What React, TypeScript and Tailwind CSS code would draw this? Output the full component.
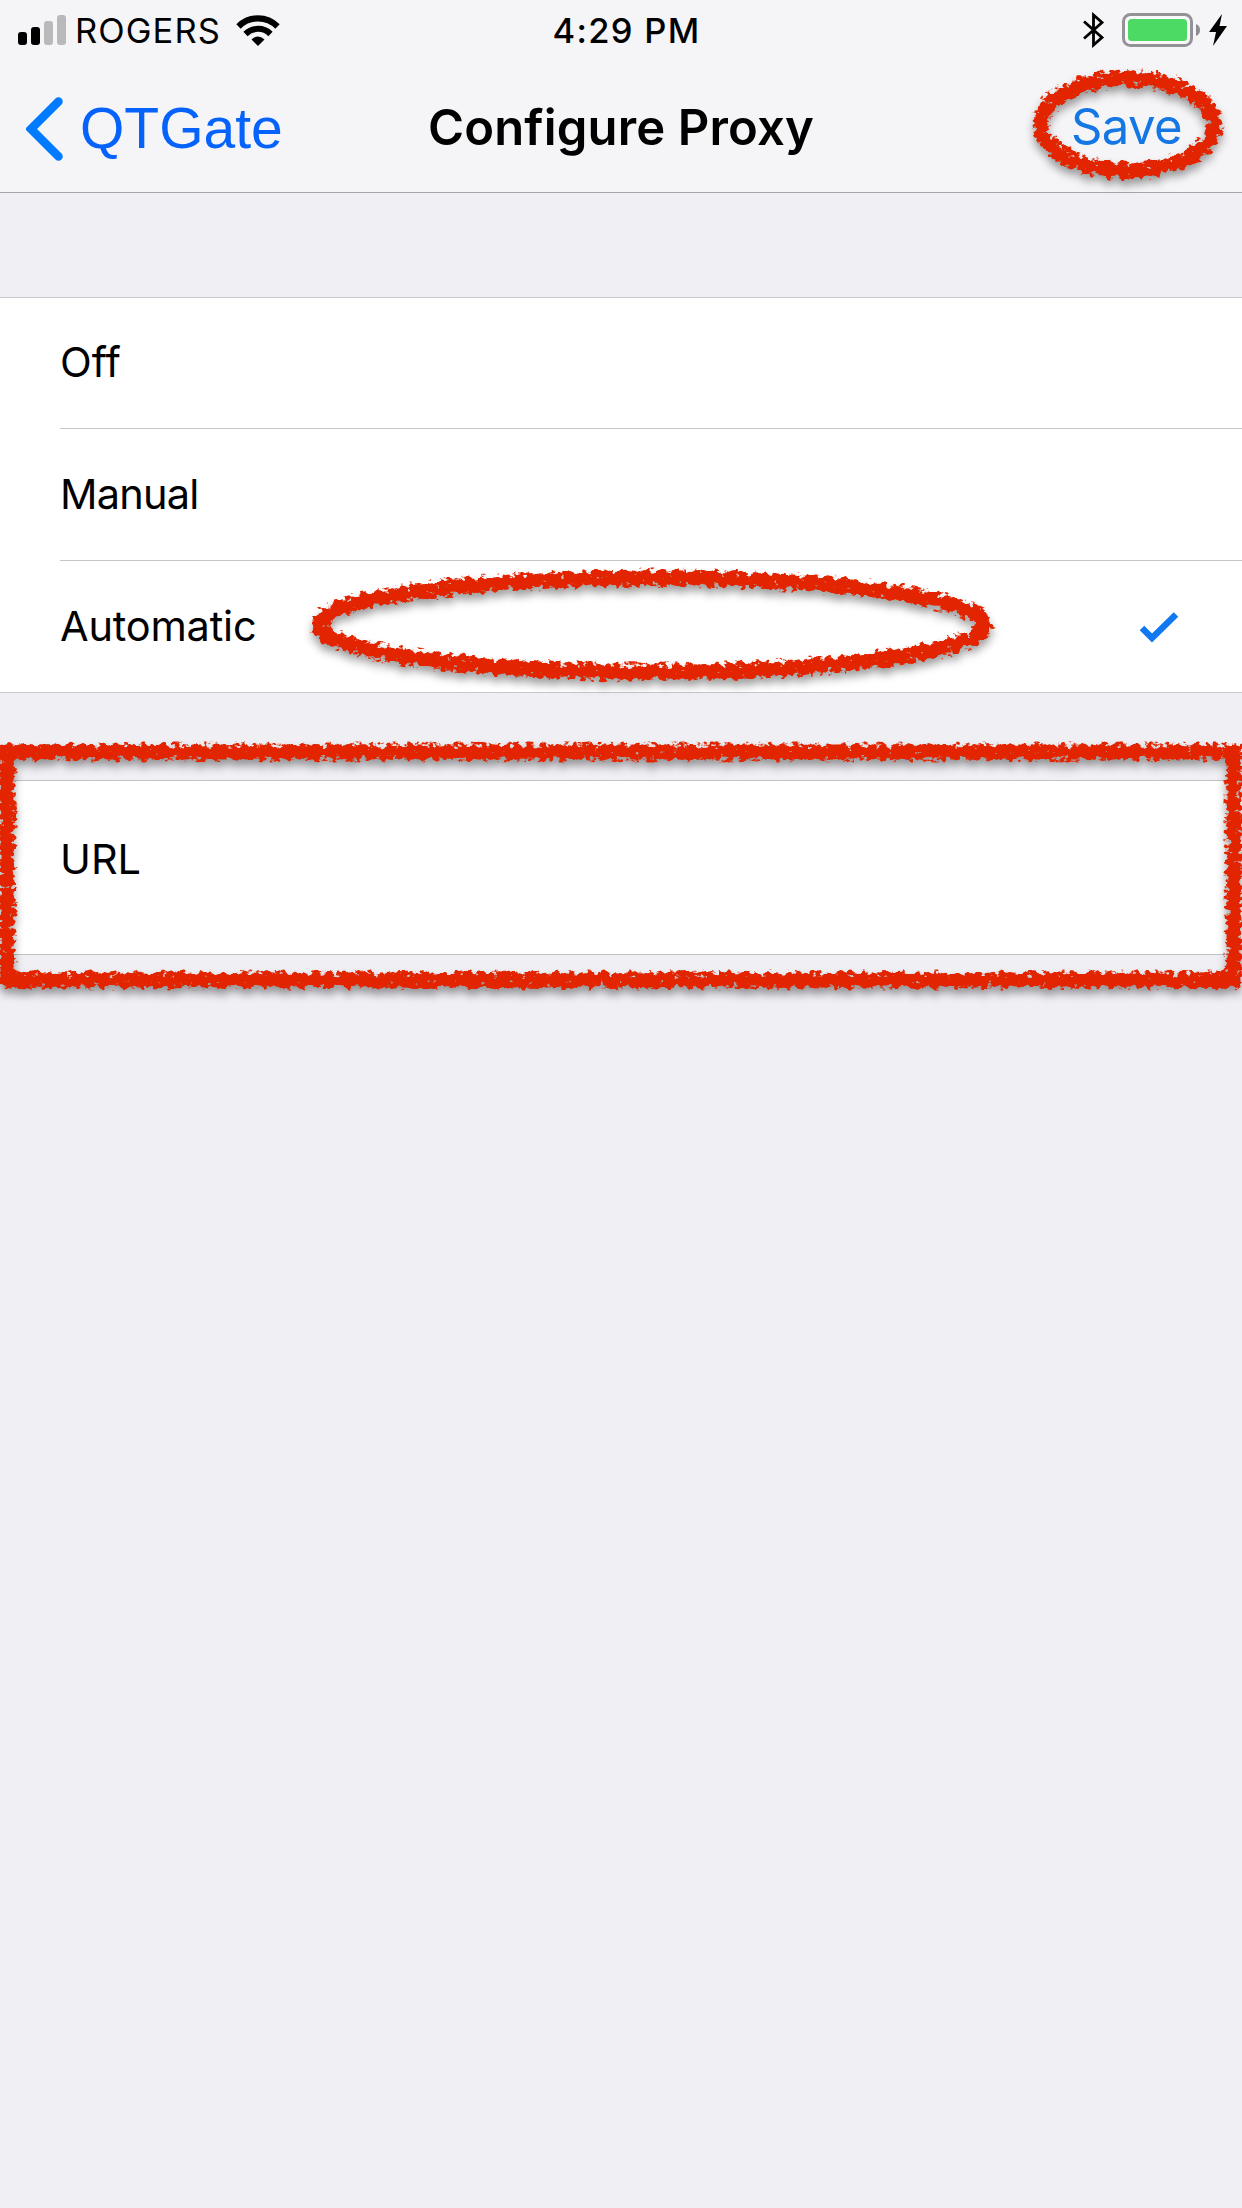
function StatusBar() {
  return (
    <div className="grid h-[60px] grid-cols-3 items-center">
      <div className="flex items-center pl-[18px]">
        <svg width="48" height="30" viewBox="0 0 48 30">
          <rect x="0" y="17" width="9" height="13" rx="3" fill="#000" />
          <rect x="13" y="12" width="9" height="18" rx="3" fill="#000" />
          <rect x="26" y="6" width="9" height="24" rx="3" fill="#b9b9bb" />
          <rect x="39" y="0" width="9" height="30" rx="3" fill="#b9b9bb" />
        </svg>
        <span className="ml-[9px] pt-[2px] text-[34.5px] tracking-[1.1px]">ROGERS</span>
        <svg className="ml-[15px]" width="44" height="31" viewBox="0 0 44 31" fill="none">
          <path d="M2.5 11.5A27.5 27.5 0 0 1 41.5 11.5" stroke="#000" strokeWidth="6.2" />
          <path d="M9.5 19A17.8 17.8 0 0 1 34.5 19" stroke="#000" strokeWidth="6" />
          <path d="M15.5 24.5Q22 18.5 28.5 24.5L22 31Z" fill="#000" />
        </svg>
      </div>
      <div className="pl-[11px] pt-[2px] text-center text-[34.5px] font-medium tracking-[1.3px]">4:29 PM</div>
      <div className="flex items-center justify-end pr-[15px]">
        <svg width="22" height="36" viewBox="0 0 22 36" fill="none" stroke="#000" strokeWidth="2.8">
          <path d="M1 9.5L19 25.5L10.5 33V3L19 10.5L1 26.5" />
        </svg>
        <svg className="ml-[17px]" width="80" height="34" viewBox="0 0 80 34">
          <rect x="1.5" y="1.5" width="68" height="31" rx="7" fill="#f9f9fa" stroke="#939297" strokeWidth="3" />
          <rect x="6" y="6" width="59" height="22" rx="3.5" fill="#4cd964" />
          <path d="M74 11Q78 12.500 78 17T74 23Z" fill="#8e8d92" />
        </svg>
        <svg className="ml-[7px]" width="18" height="32" viewBox="0 0 18 32">
          <path d="M13 0L0 18H7L4 32L18 12H10.500Z" fill="#000" />
        </svg>
      </div>
    </div>
  );
}

function NavBar() {
  return (
    <div className="grid h-[132px] grid-cols-[1fr_auto_1fr] items-center pt-[5px]">
      <div className="flex items-center pl-[26px]">
        <svg width="37" height="64" viewBox="0 0 37 64" fill="none">
          <path d="M32.500 4.500L5 32L32.500 59.500" stroke="#007aff" strokeWidth="8.500" strokeLinecap="round" strokeLinejoin="miter" />
        </svg>
        <span className="ml-[17px] font-['Liberation_Sans',sans-serif] text-[57px] text-[#0563fb]">QTGate</span>
      </div>
      <h1 className="pb-[2px] text-[49px] font-semibold tracking-[0.15px]">Configure Proxy</h1>
      <div className="flex justify-end pr-[60px] pb-[3px]">
        <button className="text-[49px] tracking-[-0.6px] text-[#1477e4]">Save</button>
      </div>
    </div>
  );
}

function Row({ label, tracking = "", checked = false, height }: { label: string; tracking?: string; checked?: boolean; height: string }) {
  return (
    <li className="group pl-[60px]">
      <div className={`flex items-center justify-between border-[#c6c5ca] group-not-last:border-b ${height}`}>
        <span className={tracking}>{label}</span>
        {checked && (
          <svg className="mr-[63px]" width="40" height="32" viewBox="0 0 40 32" fill="none">
            <path d="M3 17L13 27L37 3.500" stroke="#1078f0" strokeWidth="6.500" />
          </svg>
        )}
      </div>
    </li>
  );
}

/* Red crayon outlines that point at the settings to change. */
function Markings() {
  return (
    <svg className="pointer-events-none absolute inset-0" width="1242" height="2208" viewBox="0 0 1242 2208" fill="none">
      <defs>
        <filter id="crayon" filterUnits="userSpaceOnUse" x="-20" y="40" width="1290" height="1000" colorInterpolationFilters="sRGB">
          <feTurbulence type="fractalNoise" baseFrequency="0.15 0.2" numOctaves="3" seed="7" result="noise" />
          <feGaussianBlur in="SourceGraphic" stdDeviation="3" result="soft" />
          <feComposite in="soft" in2="noise" operator="arithmetic" k1="0" k2="0.7" k3="1.1" k4="-0.4" result="mix" />
          <feComponentTransfer in="mix" result="grain">
            <feFuncA type="linear" slope="8" intercept="-3.5" />
          </feComponentTransfer>
          <feMorphology in="SourceGraphic" operator="dilate" radius="3" result="reach" />
          <feComposite in="grain" in2="reach" operator="in" result="mask" />
          <feFlood floodColor="#e22400" />
          <feComposite in2="mask" operator="in" result="ink" />
          <feDropShadow in="ink" dx="0" dy="6" stdDeviation="4" floodColor="#000" floodOpacity="0.38" />
        </filter>
      </defs>
      <g stroke="#e22400" strokeWidth="15" filter="url(#crayon)">
        <ellipse cx="1127.500" cy="124.500" rx="86.500" ry="46" />
        <ellipse cx="652" cy="625" rx="333" ry="47" />
        <rect x="7" y="752" width="1227" height="228" />
      </g>
    </svg>
  );
}

export default function App() {
  return (
    <div className="relative h-[2208px] w-[1242px] overflow-hidden bg-[#efeff4] font-[Inter,sans-serif] text-black">
      <header className="h-[193px] border-b border-[#a7a7ab] bg-[#f5f5f7]">
        <StatusBar />
        <NavBar />
      </header>
      <main className="pt-[104px] text-[41.5px]">
        <ul className="border-y border-[#c8c7cc] bg-white">
          <Row label="Off" height="h-[131px] pb-[2px]" />
          <Row label="Manual" height="h-[132px]" tracking="tracking-[-0.8px]" />
          <Row label="Automatic" height="h-[131px]" tracking="tracking-[-0.2px]" checked />
        </ul>
        <div className="mt-[87px] h-[175px] border-y border-[#c0c0c5] bg-white pl-[60px] pt-[47px]">URL</div>
      </main>
      <Markings />
    </div>
  );
}
